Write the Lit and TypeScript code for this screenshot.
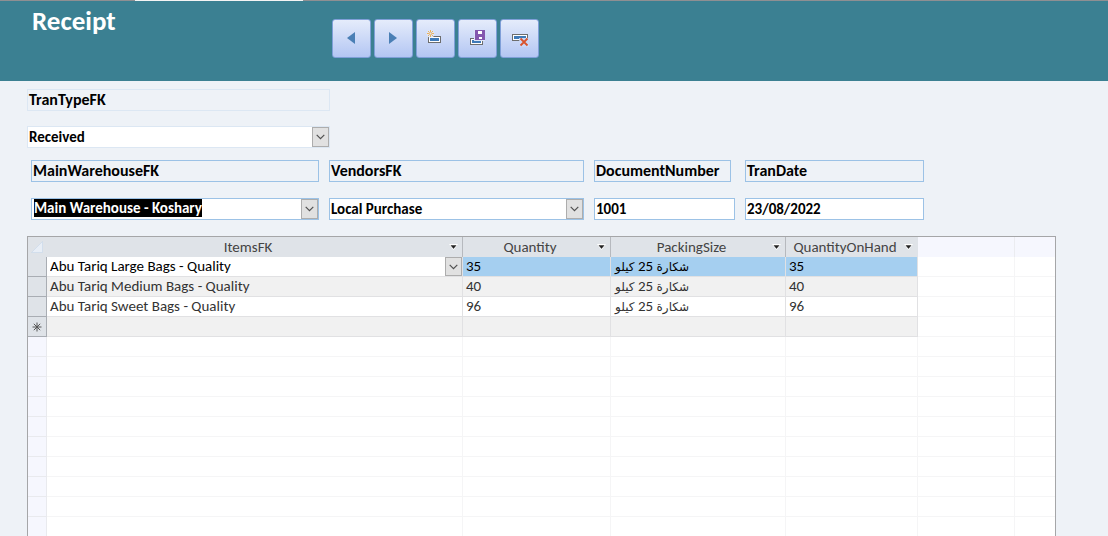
import { LitElement, html, css, svg } from "lit";
import { customElement, property, state } from "lit/decorators.js";

interface Line {
  item: string;
  quantity: number;
  packing: [string, number, string];
  onHand: number;
}

const LINES: Line[] = [
  { item: "Abu Tariq Large Bags - Quality", quantity: 35, packing: ["شكارة", 25, "كيلو"], onHand: 35 },
  { item: "Abu Tariq Medium Bags - Quality", quantity: 40, packing: ["شكارة", 25, "كيلو"], onHand: 40 },
  { item: "Abu Tariq Sweet Bags - Quality", quantity: 96, packing: ["شكارة", 25, "كيلو"], onHand: 96 },
];

const COLUMNS = ["ItemsFK", "Quantity", "PackingSize", "QuantityOnHand"];
const BLANK_ROWS = 10;

const chevron = html`<svg class="chevron" viewBox="0 0 9 6" width="9" height="6" aria-hidden="true">
  <path d="M.7 .9 4.5 4.7 8.3 .9" fill="none" stroke="#505050" stroke-width="1.2" />
</svg>`;

const ICONS = {
  previous: svg`<path d="M23 13v12L15 19z" fill="#4a7fb5"/>`,
  next: svg`<path d="M15 13v12l8-6z" fill="#4a7fb5"/>`,
  add: svg`
    <rect x="12" y="17" width="13" height="7" fill="#6d6d6d"/>
    <rect x="13" y="18" width="11" height="5" fill="#fff"/>
    <rect x="14" y="19" width="9" height="3" fill="#3f7ab8"/>
    <circle cx="14.5" cy="14.5" r="4" fill="#dce5f8"/>
    <g stroke="#edb25c" stroke-width="1" fill="none">
      <path d="M14.5 11v2M14.5 16v2M11 14.5h2M16 14.5h2M12 12l1.200 1.200M15.800 15.800l1.200 1.200M17 12l-1.200 1.200M13.200 15.800 12 17"/>
      <circle cx="14.500" cy="14.500" r="1.300"/>
    </g>`,
  save: svg`
    <rect x="12" y="19" width="13" height="7" fill="#6d6d6d"/>
    <rect x="13" y="20" width="11" height="5" fill="#fff"/>
    <rect x="14" y="21" width="9" height="3" fill="#3f7ab8"/>
    <rect x="16" y="11" width="11" height="11" fill="#dce5f8"/>
    <rect x="17" y="11" width="10" height="10" fill="#8457ae"/>
    <rect x="20" y="12" width="4" height="3" fill="#fff"/>
    <rect x="21" y="18" width="3" height="2" fill="#fff"/>`,
  remove: svg`
    <rect x="12" y="15" width="16" height="7" fill="#6d6d6d"/>
    <rect x="13" y="16" width="14" height="5" fill="#fff"/>
    <rect x="14" y="17" width="12" height="3" fill="#3f7ab8"/>
    <path d="M19 19h10v9h-9z" fill="#cbd8f6"/>
    <path d="m20.500 19.500 7 7M27.500 19.500l-7 7" stroke="#d9532c" stroke-width="1.800"/>`,
};

@customElement("tool-button")
class ToolButton extends LitElement {
  @property() icon: keyof typeof ICONS = "next";
  @property() label = "";

  static styles = css`
    :host { display: block; }
    .button {
      display: block;
      width: 39px;
      height: 39px;
      padding: 0;
      border: 1px solid #7f9fd8;
      border-radius: 3px;
      background: linear-gradient(#e5ecfb, #b3c6f3);
    }
    .glyph { display: block; }
  `;

  render() {
    return html`<button class="button" type="button" aria-label=${this.label}>
      <svg class="glyph" viewBox="1 1 37 37" width="37" height="37" aria-hidden="true">${ICONS[this.icon]}</svg>
    </button>`;
  }
}

@customElement("app-root")
class AppRoot extends LitElement {
  @state() private current = 0;

  static styles = css`
    :host {
      display: flex;
      flex-direction: column;
      height: 100vh;
      overflow: hidden;
      background: #eef2f7;
      color: #000;
      font-family: Calibri, Carlito, Lato, "DejaVu Sans", sans-serif;
      font-size: 15px;
      line-height: 20px;
    }
    * { box-sizing: border-box; }
    .edge { display: flex; height: 1px; flex: none; background: #8f8f92; }
    .tab { width: 168px; margin-left: 135px; background: #f4f4f4; }
    .header {
      display: flex;
      flex: none;
      height: 80px;
      padding-left: 32px;
      background: #3b8092;
    }
    .title {
      width: 300px;
      margin: 0;
      padding-top: 4px;
      color: #fff;
      font-size: 27px;
      line-height: 32px;
      font-weight: 700;
    }
    .tools { display: flex; gap: 3px; padding-top: 18px; }
    .content {
      display: flex;
      flex: 1;
      flex-direction: column;
      min-height: 0;
      padding: 8px 52px 0 27px;
    }
    .type { display: grid; width: 303px; gap: 15px; }
    .fields {
      display: grid;
      grid-template-columns: 288fr 255fr 141fr 179fr 122fr;
      gap: 10px;
      padding: 12px 0 16px 4px;
    }
    .field { display: grid; gap: 16px; }
    .label, .box {
      display: flex;
      height: 22px;
      border: 1px solid #9cc2e6;
      font-weight: 700;
    }
    .label { padding: 0 1px; font-size: 16px; }
    .short { margin-right: 4px; }
    .box { position: relative; width: 100%; background: #fff; }
    .type .label, .type .box { border-color: #dce7f3; }
    .control {
      width: 100%;
      min-width: 0;
      height: 20px;
      padding: 0 1px;
      border: 0;
      border-radius: 0;
      outline: 0;
      background: none;
      color: inherit;
      font: inherit;
      appearance: none;
    }
    .marked {
      width: auto;
      field-sizing: content;
      height: 18px;
      margin: 0 auto 0 2px;
      padding: 0;
      background: #000;
      color: #fff;
      line-height: 18px;
    }
    .drop {
      position: absolute;
      top: 0;
      right: 0;
      display: grid;
      place-items: center;
      width: 17px;
      height: 20px;
      border: 1px solid #adadad;
      background: #e1e1e1;
      pointer-events: none;
    }
    .sheet {
      flex: 1;
      min-height: 0;
      overflow: hidden;
      border: 1px solid #a5a6a8;
      border-bottom: 0;
      background: #fff;
    }
    .grid {
      width: 100%;
      table-layout: fixed;
      border-collapse: separate;
      border-spacing: 0;
      color: #333;
    }
    .selector-col { width: 19px; }
    .item-col { width: 416px; }
    .quantity-col { width: 148px; }
    .packing-col { width: 175px; }
    .hand-col { width: 132px; }
    .spare-col { width: 97px; }
    .head, .selector, .cell, .blank {
      height: 20px;
      padding: 0;
      border-right: 1px solid #e1e1e3;
      border-bottom: 1px solid #e1e1e3;
      font-weight: 400;
      line-height: 19px;
      white-space: nowrap;
    }
    .head { border-right-color: #b6b9be; border-bottom: 0; background: #dfe3e8; color: #444; }
    .head.corner, .head.end { border-right-color: #dfe3e8; }
    .head.spare { background: #f6f7fe; border-right-color: #ebecf0; }
    .caption { display: flex; align-items: center; padding-right: 4px; }
    .caption-text { flex: 1; text-align: center; }
    .sort { display: block; width: 9px; height: 19px; padding: 0; border: 0; background: none; }
    .glyph { display: block; margin: auto; }
    .selector { border-color: #a9adb3; background: #dfe3e8; }
    .cell { padding-left: 3px; text-align: left; }
    .shaded .cell { background: #f1f1f1; }
    .current { color: #000; }
    .current .cell { background: #a5cff0; }
    .current .item { background: #fff; }
    .picker { position: relative; display: flex; }
    .picker .control { height: 19px; padding: 0; }
    .picker .drop { height: 19px; }
    .arabic { font-family: "DejaVu Sans", sans-serif; font-size: 12px; line-height: 16px; }
    .blank { border-color: #f5f5f6; }
    .blank.side { background: #f6f7fe; border-color: #e9eaee; }
    .last { border-right: 0; }
  `;

  private combo(id: string, value: string, marked = false) {
    return html`<div class="box">
      <select id=${id} class=${marked ? "control marked" : "control"}><option>${value}</option></select>
      <span class="drop">${chevron}</span>
    </div>`;
  }

  private row(line: Line, index: number) {
    const current = index === this.current;
    const cls = current ? "current" : index % 2 ? "shaded" : "";
    const [kind, size, unit] = line.packing;
    return html`<tr class=${cls} @click=${() => (this.current = index)}>
      <td class="selector"></td>
      <td class="cell item">
        ${current
          ? html`<div class="picker">
              <select class="control" aria-label="ItemsFK"><option>${line.item}</option></select>
              <span class="drop">${chevron}</span>
            </div>`
          : line.item}
      </td>
      <td class="cell">${line.quantity}</td>
      <td class="cell" dir="rtl"><span class="arabic">${kind}</span> ${size} <span class="arabic">${unit}</span></td>
      <td class="cell">${line.onHand}</td>
      <td class="blank"></td>
      <td class="blank last"></td>
    </tr>`;
  }

  render() {
    return html`
      <div class="edge"><span class="tab"></span></div>
      <header class="header">
        <h1 class="title">Receipt</h1>
        <div class="tools">
          <tool-button icon="previous" label="Previous record"></tool-button>
          <tool-button icon="next" label="Next record"></tool-button>
          <tool-button icon="add" label="Add record"></tool-button>
          <tool-button icon="save" label="Save record"></tool-button>
          <tool-button icon="remove" label="Delete record"></tool-button>
        </div>
      </header>
      <main class="content">
        <div class="type">
          <label class="label" for="type">TranTypeFK</label>
          ${this.combo("type", "Received")}
        </div>
        <div class="fields">
          <div class="field">
            <label class="label" for="warehouse">MainWarehouseFK</label>
            ${this.combo("warehouse", "Main Warehouse - Koshary", true)}
          </div>
          <div class="field">
            <label class="label" for="vendor">VendorsFK</label>
            ${this.combo("vendor", "Local Purchase")}
          </div>
          <div class="field">
            <label class="label short" for="number">DocumentNumber</label>
            <div class="box"><input id="number" class="control" value="1001" /></div>
          </div>
          <div class="field">
            <label class="label" for="date">TranDate</label>
            <div class="box"><input id="date" class="control" value="23/08/2022" /></div>
          </div>
        </div>
        <div class="sheet">
          <table class="grid">
            <colgroup>
              <col class="selector-col" /><col class="item-col" /><col class="quantity-col" />
              <col class="packing-col" /><col class="hand-col" /><col class="spare-col" /><col />
            </colgroup>
            <thead>
              <tr>
                <th class="head corner">
                  <svg class="glyph" viewBox="0 0 12 12" width="12" height="12" aria-hidden="true">
                    <path d="M11.500 .5v11H.5z" fill="#e8eef6" stroke="#c6d6ea" stroke-width=".6" />
                  </svg>
                </th>
                ${COLUMNS.map(
                  (name, i) => html`<th class=${i === 3 ? "head end" : "head"} scope="col">
                    <div class="caption">
                      <span class="caption-text">${name}</span>
                      <button class="sort" type="button" aria-label="Sort ${name}">
                        <svg class="glyph" viewBox="0 0 9 6" width="9" height="6" aria-hidden="true">
                          <path d="M0 0h9L4.500 6z" fill="#fff" /><path d="M2 1.500h5L4.500 4.500z" fill="#222" stroke="#222" stroke-width=".5" />
                        </svg>
                      </button>
                    </div>
                  </th>`
                )}
                <th class="head spare"></th>
                <th class="head spare last"></th>
              </tr>
            </thead>
            <tbody>
              ${LINES.map((line, i) => this.row(line, i))}
              <tr class="shaded">
                <td class="selector">
                  <svg class="glyph" viewBox="0 0 10 10" width="10" height="10" aria-hidden="true">
                    <path d="M5 .5v9M.5 5h9M1.800 1.800l6.400 6.400M8.200 1.800 1.800 8.200" stroke="#555" stroke-width="1" />
                  </svg>
                </td>
                ${COLUMNS.map(() => html`<td class="cell"></td>`)}
                <td class="blank"></td>
                <td class="blank last"></td>
              </tr>
              ${Array.from({ length: BLANK_ROWS }, () => html`<tr>
                <td class="blank side"></td>
                ${COLUMNS.map(() => html`<td class="blank"></td>`)}
                <td class="blank"></td>
                <td class="blank last"></td>
              </tr>`)}
            </tbody>
          </table>
        </div>
      </main>
    `;
  }
}
